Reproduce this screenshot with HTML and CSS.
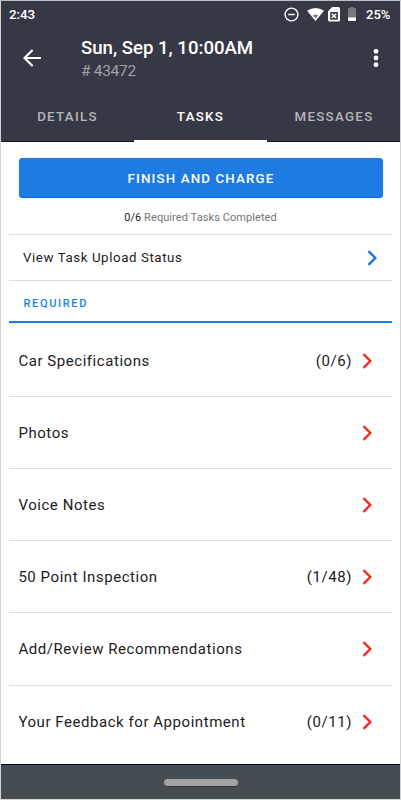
FILE: index.html
```html
<!DOCTYPE html>
<html lang="en">
<head>
<meta charset="utf-8">
<title>Appointment tasks</title>
<link rel="stylesheet" href="styles.css">
</head>
<body>
<div class="screen">
  <div class="status">
    <span class="clock">2:43</span>
    <svg class="status-icons" width="76" height="20" viewBox="0 0 76 20">
      <circle cx="8.5" cy="9.5" r="6.4" fill="none" stroke="#fff" stroke-width="1.4"/>
      <path d="M5.2 9.5h6.6" stroke="#fff" stroke-width="1.5"/>
      <path d="M24.1 5.7Q32.500 0.300 41 5.700L32.500 16z" fill="#fff"/>
      <path d="M29.800 10.300Q32.500 8.700 35.300 10.300L32.600 13.600z" fill="#777a82"/>
      <path d="M49.300 2h6a1.700 1.700 0 0 1 1.700 1.700V14.900a1.700 1.700 0 0 1-1.700 1.700h-8.600a1.700 1.700 0 0 1-1.700-1.700V6.300z" fill="#fff"/>
      <path d="M47.200 7h7.700v7.700h-7.700z" fill="#363945"/>
      <path d="M48.900 8.700l4.300 4.300m0-4.300l-4.300 4.300" stroke="#fff" stroke-width="1.5"/>
      <path d="M67.300 2h3.200v1.300h2.500V13h-8V3.300h2.300z" fill="#777a82"/>
      <path d="M65 12.500h8v2.600q0 .9-.9.900h-6.200q-.9 0-.9-.9z" fill="#fff"/>
    </svg>
    <span class="battery">25%</span>
  </div>
  <header class="bar">
    <svg class="back" width="20" height="20" viewBox="0 0 20 20"><path d="M18.900 10H2.500M10.600 1.900L2.500 10l8.100 8.100" fill="none" stroke="#fff" stroke-width="2.100"/></svg>
    <div class="heading">
      <h1 class="title">Sun, Sep 1, 10:00AM</h1>
      <div class="number"># 43472</div>
    </div>
    <svg class="more" width="6" height="20" viewBox="0 0 6 20" fill="#fff"><circle cx="3" cy="3.300" r="2.400"/><circle cx="3" cy="10" r="2.400"/><circle cx="3" cy="16.700" r="2.400"/></svg>
  </header>
  <nav class="tabs">
    <span class="tab">DETAILS</span>
    <span class="tab tab-active">TASKS</span>
    <span class="tab">MESSAGES</span>
  </nav>
  <main class="content">
    <button class="finish">FINISH AND CHARGE</button>
    <p class="progress"><b>0/6</b> Required Tasks Completed</p>
    <div class="upload"><span>View Task Upload Status</span><svg class="chevron" width="11" height="16" viewBox="0 0 11 16"><path d="M1.500 1.200L8.300 8l-6.800 6.800"/></svg></div>
    <h2 class="section">REQUIRED</h2>
    <div class="task"><span class="name">Car Specifications</span><span class="count">(0/6)</span><svg class="chevron" width="11" height="16" viewBox="0 0 11 16"><path d="M1.500 1.200L8.300 8l-6.800 6.800"/></svg></div>
    <div class="task"><span class="name">Photos</span><svg class="chevron" width="11" height="16" viewBox="0 0 11 16"><path d="M1.500 1.200L8.300 8l-6.800 6.800"/></svg></div>
    <div class="task"><span class="name">Voice Notes</span><svg class="chevron" width="11" height="16" viewBox="0 0 11 16"><path d="M1.500 1.200L8.300 8l-6.800 6.800"/></svg></div>
    <div class="task"><span class="name">50 Point Inspection</span><span class="count">(1/48)</span><svg class="chevron" width="11" height="16" viewBox="0 0 11 16"><path d="M1.500 1.200L8.300 8l-6.800 6.800"/></svg></div>
    <div class="task"><span class="name">Add/Review Recommendations</span><svg class="chevron" width="11" height="16" viewBox="0 0 11 16"><path d="M1.500 1.200L8.300 8l-6.800 6.800"/></svg></div>
    <div class="task"><span class="name">Your Feedback for Appointment</span><span class="count">(0/11)</span><svg class="chevron" width="11" height="16" viewBox="0 0 11 16"><path d="M1.500 1.200L8.300 8l-6.800 6.800"/></svg></div>
  </main>
  <footer class="navbar"><div class="handle"></div></footer>
</div>
</body>
</html>
```
FILE: styles.css
```css
* { box-sizing: border-box; }
body { margin: 0; font-family: Roboto, "Liberation Sans", sans-serif; color: #1c1c1c; }
h1, h2, p { margin: 0; font-weight: inherit; font-size: inherit; }
svg { display: block; flex: none; }
.screen { width: 401px; height: 800px; border: 1px solid #d2d3d3; border-top-color: #bcc1c0; display: flex; flex-direction: column; background: #fff; overflow: hidden; }
.status { height: 27px; background: #363945; color: #fff; display: flex; align-items: center; padding: 0 8px; font-size: 13.300px; font-weight: 500; }
.clock { flex: 1; padding-bottom: 1px; }
.status-icons { margin-right: 7px; }
.battery { width: 26px; font-size: 13px; white-space: nowrap; padding-bottom: 1px; }
.bar { height: 62px; background: #363945; border-bottom: 1px solid #313440; display: flex; align-items: center; padding: 0 21px 2px 21px; color: #fff; }
.heading { flex: 1; padding: 4px 0 0 39px; }
.title { font-size: 18.600px; line-height: 24px; font-weight: 500; white-space: nowrap; }
.number { font-size: 15.500px; line-height: 23px; color: #a1a2a8; letter-spacing: -.3px; }
.tabs { height: 52px; background: #363945; border-bottom: 1px solid #15182a; display: grid; grid-template-columns: repeat(3, 1fr); flex: none; }
.tab { display: flex; align-items: center; justify-content: center; font-size: 13.300px; font-weight: 500; letter-spacing: 1.300px; color: #b5b6ba; height: 51px; padding-top: 2px; }
.tab:last-child { padding-left: 1px; }
.tab-active { height: 52px; color: #fff; border-bottom: 2px solid #fff; padding-top: 3px; }
.content { flex: 1; min-height: 0; padding: 16px 8px 0; display: flex; flex-direction: column; }
.finish { height: 40px; margin: 0 9.500px; flex: none; border: 0; border-bottom: 1px solid #0869d8; border-radius: 4px; background: #1e7be2; color: #fff; font: 500 13.300px Roboto, sans-serif; letter-spacing: 1.150px; padding: 2px 0 0 1px; box-shadow: 0 0 1px #68a6eb; }
.progress { height: 36px; line-height: 39px; text-align: center; font-size: 11px; letter-spacing: .08px; color: #757575; }
.progress b { font-weight: 400; color: #1c1c1c; }
.upload { height: 47px; border-top: 1px solid #ddd; border-bottom: 1px solid #ddd; display: flex; align-items: center; justify-content: space-between; padding: 0 14px; font-size: 13.300px; letter-spacing: .58px; color: #1c1c1c; }
.chevron { fill: none; stroke: #f62a1c; stroke-width: 2.400px; }
.upload .chevron { stroke: #1479e8; }
.section { height: 42px; flex: none; padding: 4px 14px 0 14.500px; line-height: 38px; font-size: 11px; font-weight: 500; letter-spacing: 1.650px; color: #1683e8; border-bottom: 2px solid #147de8; }
.task { height: 72.170px; flex: none; display: flex; align-items: center; padding: 0 19px 0 9.400px; font-size: 15px; letter-spacing: .55px; border-bottom: 1px solid #ddd; }
.section + .task { height: 74px; padding-top: 2px; }
.task:last-child { border-bottom: 0; }
.name { flex: 1; }
.count { margin-right: 10px; }
.navbar { height: 35px; flex: none; background: #454d53; border-top: 1px solid #000; display: flex; align-items: center; justify-content: center; }
.handle { width: 74px; height: 7px; border-radius: 4px; background: #a0a2a4; box-shadow: 0 1px #30383d; }
```
